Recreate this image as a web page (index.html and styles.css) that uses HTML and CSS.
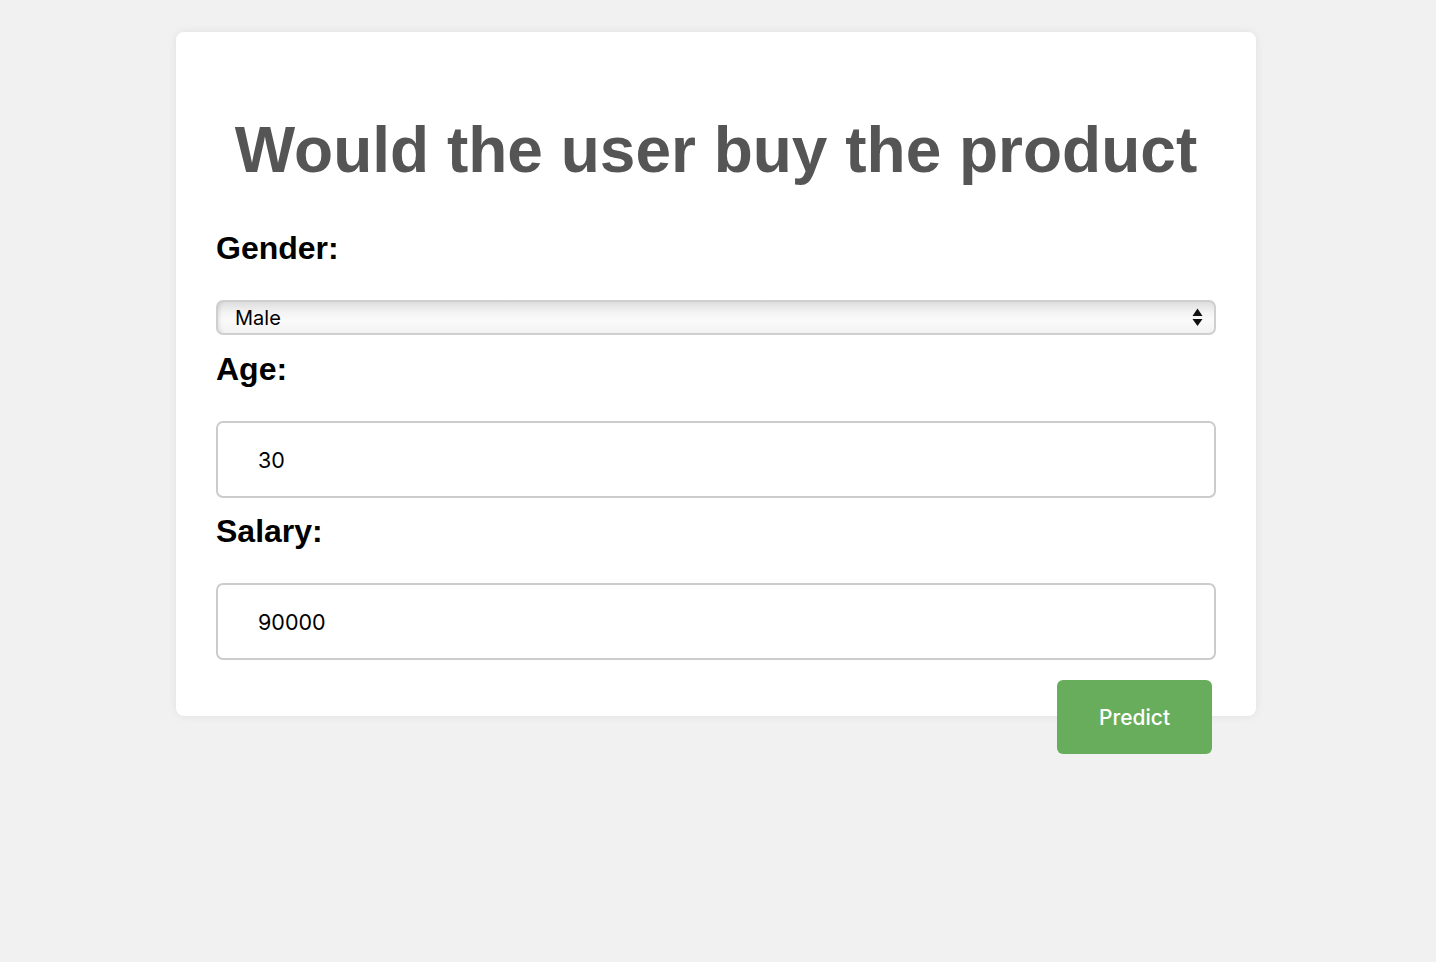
FILE: index.html
```html
<!DOCTYPE html>
<html>
<head>
<meta charset="utf-8">
<title>Would the user buy the product</title>
<link rel="stylesheet" href="styles.css">
</head>
<body>
<div class="card">
  <h1 class="title">Would the user buy the product</h1>
  <form class="form">
    <label class="label label-first" for="gender">Gender:</label>
    <div class="select-wrap">
      <select id="gender" class="select">
        <option>Male</option>
        <option>Female</option>
      </select>
      <svg class="arrows" width="11" height="20" viewBox="0 0 11 20"><path d="M5.5 1.5 L10.5 9 L0.5 9 Z" fill="#111"/><path d="M5.5 19 L10.5 12 L0.5 12 Z" fill="#111"/></svg>
    </div>
    <label class="label" for="age">Age:</label>
    <input id="age" class="input" type="text" value="30">
    <label class="label" for="salary">Salary:</label>
    <input id="salary" class="input" type="text" value="90000">
    <div class="actions">
      <button type="button" class="btn">Predict</button>
    </div>
  </form>
</div>
</body>
</html>
```
FILE: styles.css
```css
html, body {
  margin: 0;
  padding: 0;
  background: #f1f1f1;
  min-height: 100%;
}
body {
  font-family: "Liberation Sans", Arial, sans-serif;
  min-height: 962px;
}
.card {
  box-sizing: border-box;
  width: 1080px;
  height: 684px;
  margin: 32px 0 0 176px;
  padding: 81px 40px 0;
  background: #fff;
  border-radius: 8px;
  box-shadow: 0 0 10px rgba(0,0,0,0.07);
}
.title {
  margin: 0;
  text-align: center;
  font-size: 64px;
  line-height: 74px;
  font-weight: bold;
  color: #555;
}
.form {
  display: flex;
  flex-direction: column;
}
.label {
  display: block;
  font-size: 32px;
  line-height: 34px;
  font-weight: bold;
  color: #000;
  margin: 0 0 35px;
}
.label-first {
  margin-top: 44px;
}
.select-wrap {
  position: relative;
  height: 35px;
  margin-bottom: 17px;
}
.select {
  appearance: none;
  -webkit-appearance: none;
  box-sizing: border-box;
  width: 100%;
  height: 35px;
  padding: 0 0 0 17px;
  font-family: Inter, "Noto Sans", sans-serif;
  font-size: 20px;
  color: #000;
  border: 2px solid #cfcfcf;
  border-radius: 7px;
  background: linear-gradient(#dedede 0%, #f4f4f4 35%, #fafafa 60%, #f2f2f2 100%);
  box-shadow: inset 4px 0 4px -3px rgba(0,0,0,0.12);
}
.arrows {
  position: absolute;
  right: 13px;
  top: 7px;
  pointer-events: none;
}
.input {
  box-sizing: border-box;
  width: 100%;
  height: 77px;
  padding: 0 40px;
  font-family: Inter, "Noto Sans", sans-serif;
  font-size: 21.5px;
  color: #000;
  border: 2px solid #cccccc;
  border-radius: 7px;
  background: #fff;
  margin-bottom: 16px;
}
.actions {
  display: flex;
  justify-content: flex-end;
  padding-right: 4px;
  margin-top: 4px;
}
.btn {
  width: 155px;
  height: 74px;
  border: none;
  border-radius: 6px;
  background: #68ad5c;
  color: #fff;
  font-family: Inter, "Noto Sans", sans-serif;
  font-size: 21px;
  font-weight: 500;
  position: relative;
  z-index: 1;
}
```
